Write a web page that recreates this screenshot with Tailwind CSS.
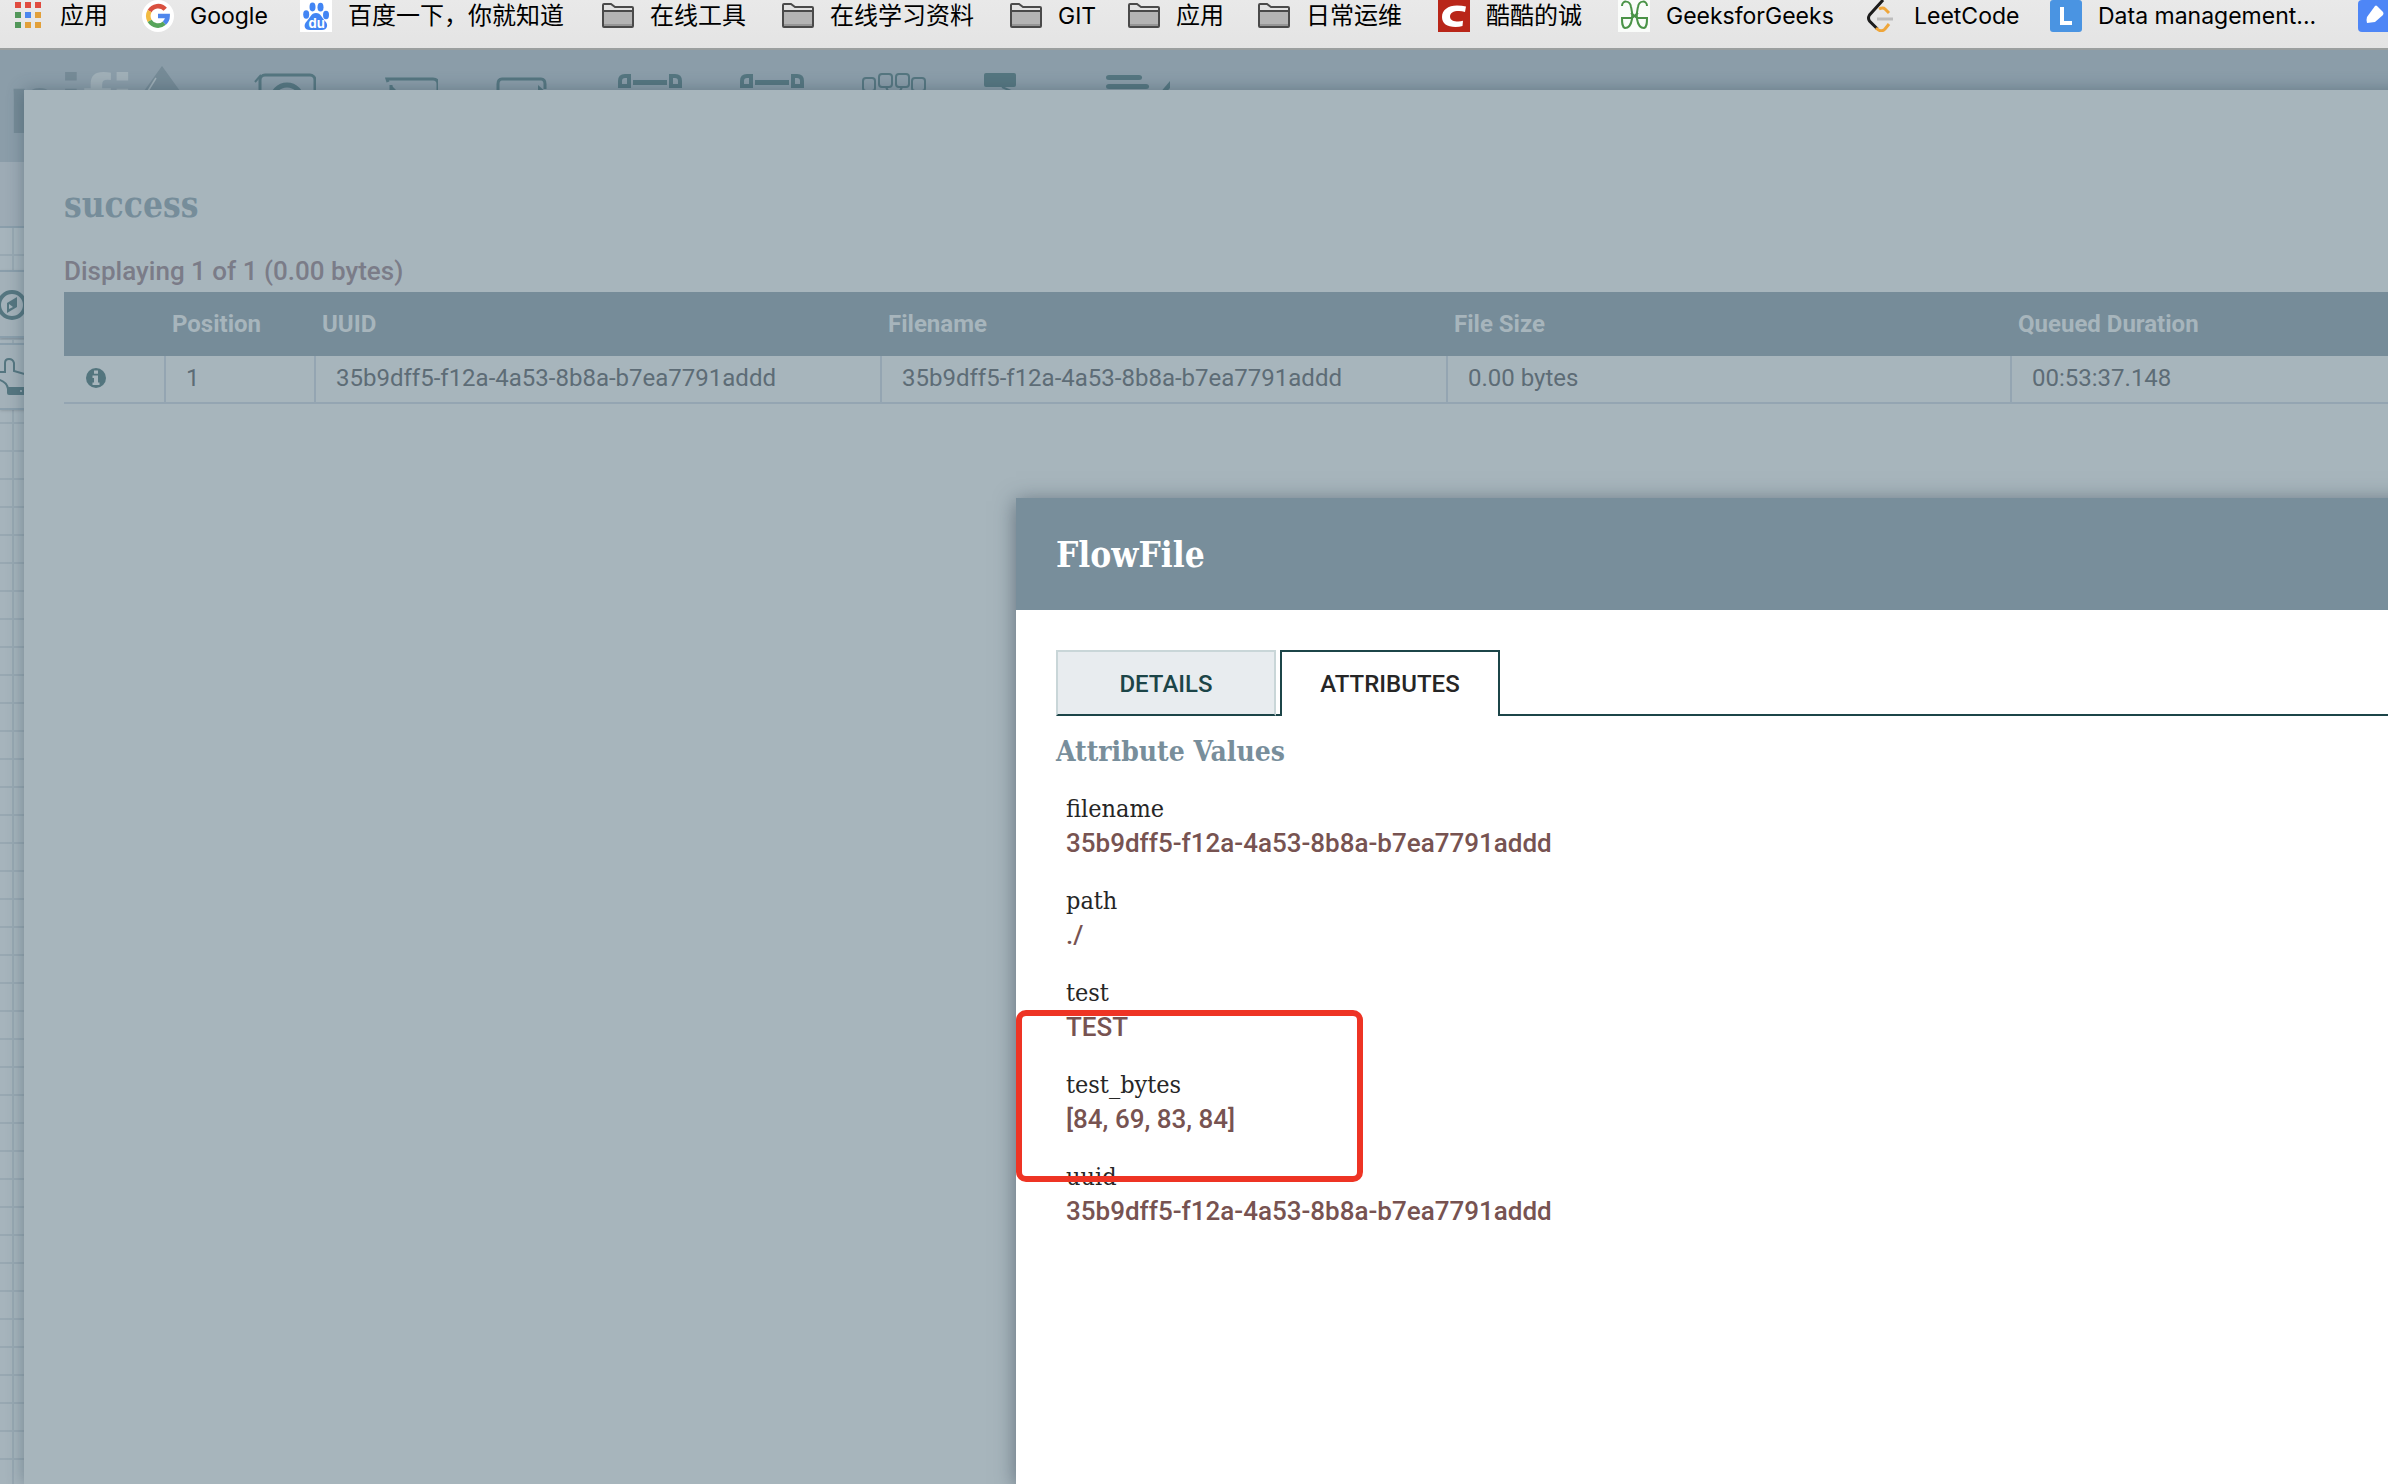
<!DOCTYPE html>
<html lang="zh-CN">
<head>
<meta charset="utf-8">
<title>NiFi Flow</title>
<script src="https://cdn.jsdelivr.net/npm/@tailwindcss/browser@4"></script>
</head>
<body class="flex h-screen flex-col overflow-hidden bg-[#a7b5bc] font-[Roboto,'Noto_Sans_CJK_SC',sans-serif]">

<!-- Shared icon shapes -->
<svg class="hidden" aria-hidden="true">
  <symbol id="folder" viewBox="0 0 32 32">
    <path d="M1 26V5q0-1 1-1h7l4 3h17q1 0 1 1v18q0 1-1 1H2q-1 0-1-1z" fill="#e2e2e2" stroke="#4a4a4a" stroke-width="2"/>
    <path d="M2 12h28v14H2z" fill="#b4b4b4"/><path d="M2 24h28v2H2z" fill="#969696"/>
    <path d="M1 11h30" stroke="#4a4a4a" stroke-width="2"/>
  </symbol>
  <symbol id="group" viewBox="0 0 64 64">
    <g fill="none" stroke="currentColor" stroke-width="4">
      <path d="M2 13V8q0-5 5-5h4v10zM62 13V8q0-5-5-5h-4v10z"/>
      <path d="M7 18v28M57 18v28"/>
      <path d="M2 61V49h9v12zM62 61V49h-9v12z"/>
    </g>
    <path d="M15 7h34v5H15zM15 53h34v5H15z" fill="currentColor"/>
  </symbol>
</svg>

<nav aria-label="Bookmarks" class="h-[50px] shrink-0 overflow-hidden border-b-2 border-[#9b9f9f] bg-linear-to-b from-[#e9e9e9] to-[#e4e4e4] pl-[14px]">
  <ul class="grid grid-cols-[128px_158px_302px_180px_228px_118px_130px_180px_180px_248px_184px_308px_80px] font-[Inter,'Noto_Sans_CJK_SC',sans-serif] text-[23px] leading-8 whitespace-nowrap text-black">
    <li><a href="#" class="flex gap-[14px] text-[24px]">
      <svg class="h-8 w-8 shrink-0" viewBox="0 0 32 32"><path d="M1 2h6v6H1zM11 2h6v6h-6zM21 2h6v6h-6z" fill="#e04b3f"/><path d="M1 12h6v6H1zM1 22h6v6H1z" fill="#52975a"/><path d="M11 12h6v6h-6z" fill="#4a87ee"/><path d="M21 12h6v6h-6zM11 22h6v6h-6zM21 22h6v6h-6z" fill="#e2a03a"/></svg>应用</a></li>
    <li><a href="#" class="flex gap-4">
      <svg class="h-8 w-8 shrink-0" viewBox="0 0 32 32"><circle cx="16" cy="16" r="16" fill="#fff"/><g fill="none" stroke-width="4.6"><path d="M23.2 9.2A9.7 9.7 0 0 0 7.6 11.2" stroke="#d9503f"/><path d="M7.6 11.2a9.7 9.7 0 0 0 0 9.6" stroke="#f2bb41"/><path d="M7.6 20.8a9.7 9.7 0 0 0 14.8 2.3" stroke="#58a55c"/><path d="M22.4 23.1A9.7 9.7 0 0 0 25.6 16H16" stroke="#4f86ec"/></g></svg>Google</a></li>
    <li><a href="#" class="flex gap-4 text-[24px]">
      <svg class="h-8 w-8 shrink-0" viewBox="0 0 32 32"><path d="M0 0h32v32H0z" fill="#fff"/><g fill="#4285f4"><ellipse cx="12.500" cy="7" rx="3" ry="4.400"/><ellipse cx="20.500" cy="7.200" rx="3" ry="4.400"/><ellipse cx="6.200" cy="14.500" rx="3" ry="4.200"/><ellipse cx="26" cy="15" rx="3" ry="4.200"/><path d="M16 13c5 0 6 5 9 8 4 4 2 9-3 9H10c-6 0-7-5-3-9 3-3 4-8 9-8z"/></g><text x="8.500" y="27.500" font-size="13" font-weight="700" fill="#fff">du</text></svg>百度一下，你就知道</a></li>
    <li><a href="#" class="flex gap-4 text-[24px]"><svg class="h-8 w-8 shrink-0"><use href="#folder"/></svg>在线工具</a></li>
    <li><a href="#" class="flex gap-4 text-[24px]"><svg class="h-8 w-8 shrink-0"><use href="#folder"/></svg>在线学习资料</a></li>
    <li><a href="#" class="flex gap-4"><svg class="h-8 w-8 shrink-0"><use href="#folder"/></svg>GIT</a></li>
    <li><a href="#" class="flex gap-4 text-[24px]"><svg class="h-8 w-8 shrink-0"><use href="#folder"/></svg>应用</a></li>
    <li><a href="#" class="flex gap-4 text-[24px]"><svg class="h-8 w-8 shrink-0"><use href="#folder"/></svg>日常运维</a></li>
    <li><a href="#" class="flex gap-4 text-[24px]">
      <svg class="h-8 w-8 shrink-0" viewBox="0 0 32 32"><path d="M0 0h32v32H0z" fill="#b92619"/><path d="M28 6.500 27 12q-3-1-6-1c-6 0-9 2-9 5.500 0 4 4 5 8 5q3 0 5-.7L24.500 26q-3 1-7 1C9 27 4 23.500 4 17 4 10 10 5.500 19 5.500q5 0 9 1z" fill="#fff"/></svg>酷酷的诚</a></li>
    <li><a href="#" class="flex gap-4">
      <svg class="h-8 w-8 shrink-0" viewBox="0 0 32 32"><path d="M0 0h32v32H0z" fill="#fafcfa"/><g fill="none" stroke="#4a9347" stroke-width="2"><path d="M4 6C4 0 12 0 13 7c1 4 2 7 1 12-1 6-4 9-7 9-3-1-3-5-3-10h10M29 6c0-6-8-6-9 1-1 4-2 7-1 12 1 6 4 9 7 9 3-1 3-5 3-10H19"/><path d="M13 13l6 5M20 13l-6 5"/></g></svg>GeeksforGeeks</a></li>
    <li><a href="#" class="flex gap-4">
      <svg class="h-8 w-8 shrink-0" viewBox="0 0 32 32"><g fill="none" stroke-width="3"><path d="M17 0 3.500 15q-2 3 0 6l8 8" stroke="#1c1c1c"/><path d="M13 9q4-2 6 0l4 4M10 28q5 5 9 1l4-5" stroke="#efa63a"/><path d="M11 19h16" stroke="#bdbdbd"/></g></svg>LeetCode</a></li>
    <li><a href="#" class="flex gap-4">
      <svg class="h-8 w-8 shrink-0" viewBox="0 0 32 32"><rect width="32" height="32" rx="3" fill="#4a94e2"/><path d="M12 7v16h10" fill="none" stroke="#fff" stroke-width="4"/></svg>Data management...</a></li>
    <li><a href="#" aria-label="More bookmarks" class="flex">
      <svg class="h-8 w-8 shrink-0" viewBox="0 0 32 32"><rect width="36" height="32" rx="4" fill="#4e86f6"/><path d="M9 17 17 6q1-1 2 0l6 6q1 1 0 3l-8 7-8 1q-1-3 0-6z" fill="#fff"/></svg></a></li>
  </ul>
</nav>

<div class="relative min-h-0 flex-1 overflow-hidden">

  <!-- Flow canvas, dimmed behind the dialogs -->
  <div class="flex h-full flex-col overflow-hidden text-[#557680]">
    <header class="flex h-28 shrink-0 items-start overflow-hidden bg-[#8b9da9]">
      <div class="flex w-[252px] shrink-0 pl-2 font-['Liberation_Sans',sans-serif] text-[84px] leading-[108px] font-bold text-[#768b97]" aria-label="nifi">
        <span>ni</span><span class="text-[#a1b0b8]">fi</span>
        <svg class="mt-4 h-20 w-14" viewBox="0 0 56 80"><path d="M28 0 46 25q8 12 8 27a26 26 0 0 1-52 0q0-15 8-27z" fill="currentColor"/><path d="M22 12 14 25" stroke="#a1b0b8" stroke-width="1.500"/></svg>
      </div>
      <div class="flex gap-[58px] pt-[23px]">
        <svg class="h-16 w-16" viewBox="0 0 64 64" fill="none" stroke="currentColor"><rect x="8" y="2" width="55" height="60" rx="5" stroke-width="3"/><path d="M3 9 9 2" stroke-width="2"/><circle cx="35" cy="27" r="15" stroke-width="5"/></svg>
        <svg class="h-16 w-16" viewBox="0 0 64 64" fill="none" stroke="currentColor" stroke-width="3"><path d="M14 9 13 6h46q5 0 5 5v42q0 5-5 5H17V12"/><path d="M17 12l7 7-7 7z" fill="currentColor" stroke="none"/></svg>
        <svg class="h-16 w-16" viewBox="0 0 64 64" fill="none" stroke="currentColor" stroke-width="3"><path d="M49 16V11q0-5-4-5H6q-4 0-4 5v42q0 5 5 5h42V44"/><path d="M42 12l9 8-9 7z" fill="currentColor" stroke="none"/></svg>
        <svg class="h-16 w-16"><use href="#group"/></svg>
        <svg class="h-16 w-16"><use href="#group"/></svg>
        <svg class="h-16 w-16" viewBox="0 0 64 64" fill="none" stroke="currentColor" stroke-width="2"><rect x="1" y="5" width="12" height="13" rx="3"/><rect x="17" y="1" width="13" height="13" rx="3"/><rect x="34" y="1" width="13" height="13" rx="3"/><rect x="50" y="5" width="13" height="13" rx="3"/><path d="M24 14l3 6M40 14l-3 6"/></svg>
        <svg class="h-16 w-16" viewBox="0 0 64 64"><rect width="32" height="14" rx="2" fill="currentColor"/><path d="M18 14l9 4" stroke="currentColor" stroke-width="2"/></svg>
        <svg class="h-16 w-16" viewBox="0 0 64 64" fill="currentColor"><rect y="2" width="36" height="5" rx="3"/><rect y="11" width="43" height="5" rx="3"/><path d="M64 8v7l-14 16-3-3z"/></svg>
      </div>
    </header>
    <div class="h-[66px] shrink-0 border-b-2 border-[#8a9eab] bg-[#9dabb5]"></div>
    <div class="flex flex-1 flex-col items-start gap-[5px] bg-[#a6b4bc] bg-[linear-gradient(#98a8b2_2px,transparent_2px),linear-gradient(90deg,#98a8b2_2px,transparent_2px)] bg-[size:28px_28px] bg-[position:12px_26px] pt-[42px]">
      <div class="h-[68px] w-64 border-y-2 border-[#8a9eab] bg-[#a3b1b9] shadow">
        <svg class="h-16 w-8" viewBox="0 0 32 64"><circle cx="12" cy="33" r="13" fill="none" stroke="currentColor" stroke-width="4"/><path d="M7 31 17 25v10L7 41z" fill="currentColor"/><path d="M9 32l4 3-4 2z" fill="#a6b4bc"/></svg>
      </div>
      <div class="h-[67px] w-64 border-y-2 border-[#8a9eab] bg-[#a3b1b9] shadow">
        <svg class="h-16 w-8" viewBox="0 0 32 64"><path d="M-4 27h9V18q0-4 4-4t5 4v8l14 4v14H8q-1-8-12-10" fill="none" stroke="currentColor" stroke-width="2"/><rect x="7" y="42" width="22" height="8" rx="2" fill="currentColor"/><circle cx="21" cy="46" r="1" fill="#a6b4bc"/></svg>
      </div>
    </div>
  </div>

  <!-- Queue listing -->
  <section class="absolute top-10 -right-6 bottom-0 left-6 bg-[#a7b5bc] pt-[89px] pl-10 shadow-[0_0_16px_rgba(50,75,90,0.45)]">
    <h1 class="h-[74px] font-['DejaVu_Serif_Condensed','DejaVu_Serif',serif] text-[35px] leading-[52px] font-bold text-[#768d9a]">success</h1>
    <p class="h-[39px] pt-[2px] text-[26px] leading-8 font-medium text-[#7b7c88]">Displaying 1 of 1 (0.00 bytes)</p>
    <table class="w-full table-fixed border-separate border-spacing-0 text-left text-[24px] whitespace-nowrap">
      <colgroup><col class="w-[102px]"><col class="w-[150px]"><col class="w-[566px]"><col class="w-[566px]"><col class="w-[564px]"><col></colgroup>
      <thead>
        <tr class="h-16 bg-[#768c99] text-[#a7b5bc]">
          <th aria-label="Details"></th><th class="pl-[6px] font-bold">Position</th><th class="pl-[6px] font-bold">UUID</th><th class="pl-[6px] font-bold">Filename</th><th class="pl-[6px] font-bold">File Size</th><th class="pl-[6px] font-bold">Queued Duration</th>
        </tr>
      </thead>
      <tbody>
        <tr class="h-12 leading-8 text-[#5d6c76] [&>td]:border-b-2 [&>td]:border-[#94a5b2] [&>td]:pb-[2px]">
          <td class="border-r-2 pl-[22px]"><button type="button" aria-label="View details" class="block"><svg class="h-5 w-5" viewBox="0 0 20 20"><circle cx="10" cy="10" r="10" fill="#53757e"/><path d="M8 2.500h4v3.200H8zM6.500 7.500H12v7h1.500V17h-7v-2.500H8v-4.500H6.500z" fill="#a7b5bc"/></svg></button></td>
          <td class="border-r-2 pl-5">1</td>
          <td class="border-r-2 pl-5">35b9dff5-f12a-4a53-8b8a-b7ea7791addd</td>
          <td class="border-r-2 pl-5">35b9dff5-f12a-4a53-8b8a-b7ea7791addd</td>
          <td class="border-r-2 pl-5">0.00 bytes</td>
          <td class="pl-5">00:53:37.148</td>
        </tr>
      </tbody>
    </table>
  </section>

  <!-- FlowFile dialog -->
  <section role="dialog" aria-labelledby="dialog-title" class="absolute top-[448px] -right-6 bottom-0 left-[1016px] bg-white shadow-[0_3px_20px_rgba(50,65,80,0.6)]">
    <header class="flex h-28 items-center bg-[#788e9b] pt-[2px] pl-10">
      <h2 id="dialog-title" class="font-['DejaVu_Serif_Condensed','DejaVu_Serif',serif] text-[35px] leading-10 font-bold text-white">FlowFile</h2>
    </header>
    <div class="pt-10 pl-10">
      <div role="tablist" class="flex h-[66px] text-[24px] font-medium">
        <button type="button" role="tab" class="w-[220px] border-2 border-[#c9d6d8] border-b-[#1c4548] bg-[#e8ecef] pt-[2px] text-[#1c4548]">DETAILS</button>
        <span class="w-1 border-b-2 border-[#1c4548]"></span>
        <button type="button" role="tab" aria-selected="true" class="w-[220px] border-2 border-b-0 border-[#1c4548] text-[#262626]">ATTRIBUTES</button>
        <span class="flex-1 border-b-2 border-[#1c4548]"></span>
      </div>
      <h3 class="pt-4 font-['DejaVu_Serif_Condensed','DejaVu_Serif',serif] text-[28px] leading-10 font-bold text-[#788e9b]">Attribute Values</h3>
      <dl class="relative pt-[20px] pl-[10px] text-[26px] leading-[34px] font-medium text-[#775351] [&_dt]:font-['DejaVu_Serif_Condensed','DejaVu_Serif',serif] [&_dt]:text-[25px] [&_dt]:font-normal [&_dt]:text-[#262626] [&_dd]:mb-6">
        <dt>filename</dt><dd>35b9dff5-f12a-4a53-8b8a-b7ea7791addd</dd>
        <dt>path</dt><dd>./</dd>
        <dt>test</dt><dd>TEST</dd>
        <dt>test_bytes</dt><dd>[84, 69, 83, 84]</dd>
        <dt>uuid</dt><dd>35b9dff5-f12a-4a53-8b8a-b7ea7791addd</dd>
        <!-- Highlight around the converted attribute -->
        <div aria-hidden="true" class="pointer-events-none absolute top-[238px] -left-10 h-[172px] w-[347px] rounded-[10px] border-6 border-[#ee3424]"></div>
      </dl>
    </div>
  </section>
</div>
</body>
</html>
